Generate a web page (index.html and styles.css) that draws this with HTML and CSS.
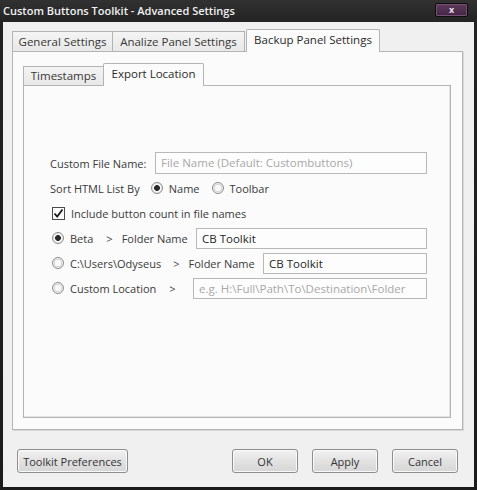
FILE: index.html
```html
<!DOCTYPE html>
<html>
<head>
<meta charset="utf-8">
<link rel="stylesheet" href="styles.css">
</head>
<body>
<div class="window">
  <div class="titlebar">
    <span class="title">Custom Buttons Toolkit - Advanced Settings</span>
    <span class="close">x</span>
  </div>
  <div class="client">
    <div class="tabs outer-tabs">
      <div class="tab t-general">General Settings</div>
      <div class="tab t-analize">Analize Panel Settings</div>
      <div class="tab active t-backup">Backup Panel Settings</div>
    </div>
    <div class="panel outer-panel">
      <div class="tabs inner-tabs">
        <div class="tab t-time">Timestamps</div>
        <div class="tab active t-export">Export Location</div>
      </div>
      <div class="panel inner-panel">
        <div class="form">
          <div class="row">
            <span class="label">Custom File Name:</span>
            <span class="input w1 placeholder">File Name (Default: Custombuttons)</span>
          </div>
          <div class="row">
            <span class="label">Sort HTML List By</span>
            <span class="radio on r-name"></span><span class="opt">Name</span>
            <span class="radio r-toolbar"></span><span class="opt">Toolbar</span>
          </div>
          <div class="row pad">
            <span class="check"><svg width="11" height="11" viewBox="0 0 11 11"><path d="M1.5 5.5 L4.2 8.5 L9.5 1.5" fill="none" stroke="#1a1a1a" stroke-width="1.8"/></svg></span>
            <span class="opt">Include button count in file names</span>
          </div>
          <div class="row pad">
            <span class="radio on"></span><span class="opt">Beta</span>
            <span class="gt g1">&gt;</span><span class="opt">Folder Name</span>
            <span class="input w2">CB Toolkit</span>
          </div>
          <div class="row pad">
            <span class="radio"></span><span class="opt">C:\Users\Odyseus</span>
            <span class="gt g2">&gt;</span><span class="opt">Folder Name</span>
            <span class="input w3">CB Toolkit</span>
          </div>
          <div class="row pad">
            <span class="radio"></span><span class="opt">Custom Location</span>
            <span class="gt g3">&gt;</span>
            <span class="input w4 placeholder">e.g. H:\Full\Path\To\Destination\Folder</span>
          </div>
        </div>
      </div>
    </div>
    <div class="buttons">
      <button class="btn wide">Toolkit Preferences</button>
      <div class="spacer"></div>
      <button class="btn">OK</button>
      <button class="btn">Apply</button>
      <button class="btn">Cancel</button>
    </div>
  </div>
</div>
</body>
</html>
```
FILE: styles.css
```css
* { box-sizing: border-box; }
html, body {
  margin: 0;
  padding: 0;
  background: #1b1b1b;
}
body {
  font-family: "Open Sans", "Noto Sans", sans-serif;
  font-size: 11px;
  color: #353535;
}
.window {
  width: 477px;
  height: 490px;
  display: flex;
  flex-direction: column;
  background: linear-gradient(#313131, #222 24px, #1b1b1b);
}
.titlebar {
  height: 22px;
  flex: none;
  display: flex;
  align-items: center;
  justify-content: space-between;
  padding: 0 9px 0 3px;
}
.title {
  color: #f0f0f0;
  font-weight: 600;
  font-size: 11px;
  margin-top: -2px;
  white-space: nowrap;
}
.close {
  display: block;
  flex: none;
  width: 33px;
  height: 14px;
  border: 1px solid #0e0e0e;
  border-radius: 2px;
  box-shadow: inset 0 0 0 1px #74506f;
  background: linear-gradient(#5e3a5b, #432644);
  color: #eadfea;
  font-size: 9px;
  line-height: 11px;
  text-align: center;
  font-weight: 700;
  margin-top: -2px;
}
.client {
  margin: 0 3px 3px 3px;
  flex: 1;
  background: #f0f0f0;
  padding: 7px 11px 0 9px;
  display: flex;
  flex-direction: column;
}
.tabs {
  display: flex;
  align-items: flex-end;
  height: 22px;
  flex: none;
  position: relative;
  z-index: 1;
}
.tab {
  height: 20px;
  line-height: 19px;
  border: 1px solid #b4b4b4;
  border-bottom: none;
  background: linear-gradient(#f4f4f4, #e8e8e8);
  color: #383838;
  font-size: 11.5px;
  text-align: center;
  white-space: nowrap;
}
.tab.active {
  height: 23px;
  line-height: 19px;
  background: #fbfbfb;
  margin-bottom: -1px;
  border-radius: 2px 2px 0 0;
  color: #2a2a2a;
}
.t-general { width: 101px; }
.t-analize { width: 133px; margin-left: -1px; }
.t-backup { width: 134px; margin-left: 1px; }
.panel {
  border: 1px solid #b4b4b4;
  background: #fbfbfb;
}
.outer-panel {
  height: 379px;
  flex: none;
  padding: 12px 11px 0 10px;
  box-shadow: 1px 1px 0 #d8d8d8;
}
.inner-tabs { height: 21px; }
.t-time { width: 81px; height: 19px; line-height: 18px; }
.t-export { width: 101px; height: 22px; line-height: 19px; margin-left: -1px; }
.inner-panel {
  height: 333px;
  padding: 66px 0 0 26px;
  box-shadow: inset -1px -1px 0 #e4e4e4;
}
.form {
  width: 377px;
  display: flex;
  flex-direction: column;
  gap: 3px;
}
.row {
  height: 22px;
  display: flex;
  align-items: center;
  font-size: 11px;
  white-space: nowrap;
}
.row.pad { padding-left: 2px; }
.label { color: #3a3a3a; }
.input {
  height: 22px;
  line-height: 20px;
  border: 1px solid #b8b8b8;
  background: #fdfdfd;
  padding: 0 5px;
  margin-left: auto;
  font-size: 11.5px;
  color: #262626;
}
.input.placeholder { color: #a8a8a8; }
.w1 { width: 272px; }
.w2 { width: 231px; height: 21px; }
.w3 { width: 164px; height: 21px; }
.w4 { width: 234px; height: 21px; }
.radio {
  width: 12px;
  height: 12px;
  border-radius: 50%;
  border: 1px solid #8c8c8c;
  background: radial-gradient(circle, #fafafa 0 3px, #d6d6d6 3.5px 4px, #f2f2f2 4.5px);
  flex: none;
}
.radio.on {
  background: radial-gradient(circle, #2a2a2a 0 2.6px, #f6f6f6 3.2px 4px, #eaeaea 4.5px);
}
.r-name { margin-left: 11px; }
.r-toolbar { margin-left: 12px; }
.opt { margin-left: 6px; color: #3a3a3a; }
.check {
  width: 13px;
  height: 13px;
  border: 1px solid #4a4a4a;
  background: #fdfdfd;
  display: flex;
  align-items: center;
  justify-content: center;
  flex: none;
}
.gt { color: #444; }
.g1 { margin-left: 13px; margin-right: 3px; }
.g2 { margin-left: 12px; margin-right: 3px; }
.g3 { margin-left: 13px; }
.buttons {
  display: flex;
  align-items: center;
  margin-top: 19px;
  padding-left: 5px;
}
.spacer { flex: 1; }
.btn {
  height: 24px;
  width: 66px;
  border: 1px solid #8e8e8e;
  border-radius: 3px;
  background: linear-gradient(#f2f2f2, #e2e2e2 50%, #d6d6d6);
  box-shadow: inset 0 0 0 1px #f8f8f8;
  font-family: "Open Sans", "Noto Sans", sans-serif;
  font-size: 11px;
  color: #333;
  padding: 0;
  margin-left: 14px;
}
.btn.wide { width: 111px; margin-left: 0; }
.btn:last-child { margin-right: 5px; }
```
